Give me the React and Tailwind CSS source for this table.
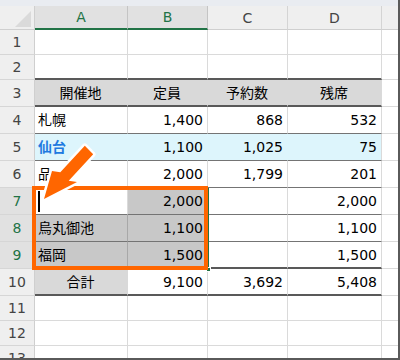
import React from 'react';

const W = ['w-[93px]', 'w-[80px]', 'w-[80px]', 'w-[94px]'];
const GRID_B = 'border-b border-b-[#dadada]';
const THIN_B = 'border-b border-b-[#747474]';
const THICK_B = 'border-b-2 border-b-[#595959]';

function Row({ h, n, sel, bb = GRID_B, cells = [{}, {}, {}, {}] }) {
  return (
    <div className={`flex ${h}`}>
      <div
        className={`flex items-center justify-center shrink-0 w-[35px] border-r border-r-[#cfcfcf] border-b border-b-[#d6d6d6] ${
          sel ? 'bg-[#e1e1e1] text-[#217346]' : 'bg-[#efefef] text-[#444444]'
        }`}
      >
        {n}
      </div>
      {cells.map((c, i) => (
        <div
          key={i}
          className={`flex items-center shrink-0 border-r pl-[3px] pr-[4px] whitespace-nowrap ${W[i]} ${bb} ${
            c.br || 'border-r-[#dadada]'
          } ${c.bg || 'bg-white'} ${c.al || 'justify-end'} ${c.cls || ''}`}
        >
          {c.t}
        </div>
      ))}
      <div className="flex-1 border-b border-b-[#dadada]"></div>
    </div>
  );
}

const GRAY = 'bg-[#d9d9d9]';
const SEL = 'bg-[#c8c8c8]';
const CYAN = 'bg-[#ddf5fc]';

export default function App() {
  return (
    <div className="relative w-[400px] h-[360px] overflow-hidden bg-white border-r-2 border-b-2 border-[#5a5a5a] font-['DejaVu_Sans','Noto_Sans_CJK_JP',sans-serif] text-[14px] text-black leading-none">
      <div className="h-[358px] overflow-hidden">
        <div className="h-[6px] bg-[#e9ecf1]"></div>
        {/* column header */}
        <div className="flex h-[24px] text-[14px]">
          <div className="shrink-0 w-[35px] bg-[#efefef] border-r border-r-[#cfcfcf] border-b border-b-[#cfcfcf]">
            <svg width="34" height="23" viewBox="0 0 34 23">
              <polygon points="15,21 31,21 31,5" fill="#dadada" />
            </svg>
          </div>
          <div className="flex items-center justify-center shrink-0 w-[93px] bg-[#e1e1e1] text-[#217346] border-r border-r-[#c4c4c4] border-b-2 border-b-[#217346]">A</div>
          <div className="flex items-center justify-center shrink-0 w-[80px] bg-[#e1e1e1] text-[#217346] border-r border-r-[#c4c4c4] border-b-2 border-b-[#217346]">B</div>
          <div className="flex items-center justify-center shrink-0 w-[80px] bg-[#efefef] text-[#444444] border-r border-r-[#d4d4d4] border-b border-b-[#cfcfcf]">C</div>
          <div className="flex items-center justify-center shrink-0 w-[94px] bg-[#efefef] text-[#444444] border-r border-r-[#d4d4d4] border-b border-b-[#cfcfcf]">D</div>
          <div className="flex-1 bg-[#efefef] border-b border-b-[#cfcfcf]"></div>
        </div>

        <Row h="h-[25px]" n="1" />
        <Row h="h-[25px]" n="2" bb={THICK_B} />
        <Row
          h="h-[27px]"
          n="3"
          bb={THICK_B}
          cells={[
            { t: '開催地', bg: GRAY, br: 'border-r-[#d9d9d9]', al: 'justify-center' },
            { t: '定員', bg: GRAY, br: 'border-r-[#d9d9d9]', al: 'justify-center' },
            { t: '予約数', bg: GRAY, br: 'border-r-[#d9d9d9]', al: 'justify-center' },
            { t: '残席', bg: GRAY, al: 'justify-center' },
          ]}
        />
        <Row
          h="h-[27px]"
          n="4"
          bb={THIN_B}
          cells={[{ t: '札幌', al: 'justify-start' }, { t: '1,400' }, { t: '868' }, { t: '532' }]}
        />
        <Row
          h="h-[27px]"
          n="5"
          bb={THIN_B}
          cells={[
            { t: '仙台', al: 'justify-start', bg: CYAN, br: 'border-r-[#ddf5fc]', cls: 'font-bold text-[#1f7ae0]' },
            { t: '1,100', bg: CYAN, br: 'border-r-[#ddf5fc]' },
            { t: '1,025', bg: CYAN, br: 'border-r-[#ddf5fc]' },
            { t: '75', bg: CYAN },
          ]}
        />
        <Row
          h="h-[27px]"
          n="6"
          bb={THIN_B}
          cells={[{ t: '品', al: 'justify-start' }, { t: '2,000' }, { t: '1,799' }, { t: '201' }]}
        />
        <Row
          h="h-[27px]"
          n="7"
          sel
          bb={THIN_B}
          cells={[
            { t: <div className="w-[1.5px] h-[21px] bg-black"></div>, al: 'justify-start' },
            { t: '2,000', bg: SEL },
            { t: '' },
            { t: '2,000' },
          ]}
        />
        <Row
          h="h-[27px]"
          n="8"
          sel
          bb={THIN_B}
          cells={[
            { t: '烏丸御池', al: 'justify-start', bg: SEL, br: 'border-r-[#a8a8a8]' },
            { t: '1,100', bg: SEL },
            { t: '' },
            { t: '1,100' },
          ]}
        />
        <Row
          h="h-[27px]"
          n="9"
          sel
          bb={THICK_B}
          cells={[
            { t: '福岡', al: 'justify-start', bg: SEL, br: 'border-r-[#a8a8a8]' },
            { t: '1,500', bg: SEL },
            { t: '' },
            { t: '1,500' },
          ]}
        />
        <Row
          h="h-[27px]"
          n="10"
          bb={THICK_B}
          cells={[
            { t: '合計', al: 'justify-center', bg: GRAY, br: 'border-r-[#d9d9d9]' },
            { t: '9,100' },
            { t: '3,692' },
            { t: '5,408' },
          ]}
        />
        <Row h="h-[25px]" n="11" />
        <Row h="h-[25px]" n="12" />
        <Row h="h-[25px]" n="13" />
      </div>

      {/* Excel selection edge + fill handle */}
      <div className="absolute left-[208px] top-[188px] w-[1px] h-[82px] bg-[#217346]"></div>
      <div className="absolute left-[206px] top-[267px] w-[5px] h-[5px] bg-[#217346] border border-white"></div>

      {/* orange highlight rectangle */}
      <div className="absolute left-[32px] top-[186px] w-[176px] h-[84px] border-4 border-[#ff6600]"></div>

      {/* arrow */}
      <svg className="absolute left-0 top-0 pointer-events-none" width="400" height="360" viewBox="0 0 400 360">
        <polygon
          points="84.8,145.8 60.3,172.3 52,171 44,199 77,182 68.7,180.7 93.2,154.2"
          fill="#ff6600"
          stroke="#ffffff"
          strokeWidth="5"
          strokeLinejoin="round"
          paintOrder="stroke"
        />
      </svg>
    </div>
  );
}
